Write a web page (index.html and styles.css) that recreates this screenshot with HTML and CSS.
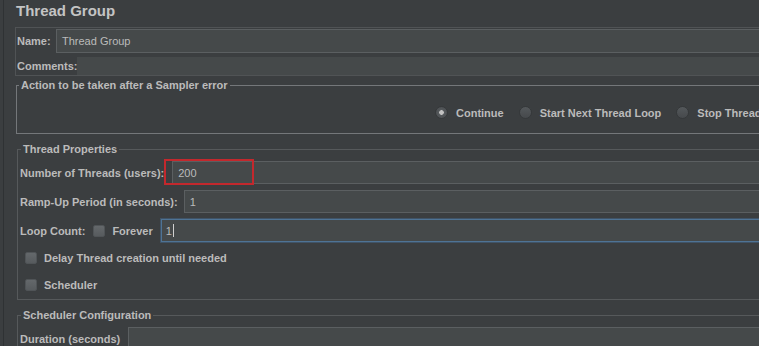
FILE: index.html
```html
<!doctype html>
<html>
    <head>
        <title>Thread Group</title>
        <link rel="stylesheet" href="styles.css">
    </head>
    <body>
        <div class="page">
            <h1 class="title">Thread Group</h1>

            <div class="name_box">
                <div class="row">
                    <span class="label label_name">Name:</span>
                    <div class="field field_tall">Thread Group</div>
                </div>
                <div class="row row_comments">
                    <span class="label label_comments">Comments:</span>
                    <div class="field field_short"></div>
                </div>
            </div>

            <fieldset class="group group_action">
                <legend>Action to be taken after a Sampler error</legend>
                <div class="radio_row">
                    <span class="option"><span class="radio selected"></span>Continue</span>
                    <span class="option"><span class="radio"></span>Start Next Thread Loop</span>
                    <span class="option"><span class="radio"></span>Stop Thread</span>
                </div>
            </fieldset>

            <fieldset class="group group_props">
                <legend>Thread Properties</legend>
                <div class="prop_row row_threads">
                    <span class="label">Number of Threads (users):</span>
                    <div class="field field_threads">200</div>
                    <div class="highlight"></div>
                </div>
                <div class="prop_row">
                    <span class="label">Ramp-Up Period (in seconds):</span>
                    <div class="field field_ramp">1</div>
                </div>
                <div class="prop_row">
                    <span class="label">Loop Count:</span>
                    <span class="check check_forever"></span>
                    <span class="check_label">Forever</span>
                    <div class="field field_loop focused">1<span class="caret"></span></div>
                </div>
                <div class="check_row">
                    <span class="check"></span>
                    <span class="check_label">Delay Thread creation until needed</span>
                </div>
                <div class="check_row">
                    <span class="check"></span>
                    <span class="check_label">Scheduler</span>
                </div>
            </fieldset>

            <fieldset class="group group_sched">
                <legend>Scheduler Configuration</legend>
                <div class="prop_row">
                    <span class="label">Duration (seconds)</span>
                    <div class="field field_duration"></div>
                </div>
            </fieldset>
        </div>
    </body>
</html>
```

FILE: styles.css
```css
html, body {
    margin: 0;
    padding: 0;
    overflow: hidden;
    background-color: #3b3e40;
}
body {
    font-family: "Liberation Sans", Arial, sans-serif;
    font-size: 11px;
    font-weight: bold;
    color: #bbbbbb;
}
.page {
    width: 820px;
    min-height: 346px;
    margin-left: 3px;
    padding-left: 11px;
    border-left: 1px solid #2f3234;
}
.title {
    margin: 0;
    padding: 2px 0 0 1px;
    font-size: 15px;
    line-height: 18px;
    color: #c4c4c4;
}

/* name / comments */
.name_box {
    margin-top: 7px;
    padding: 1px 0 0 1px;
    border: 1px solid #505355;
}
.row {
    display: flex;
    align-items: center;
}
.row_comments {
    margin-top: 4px;
}
.label {
    flex: none;
}
.label_name {
    width: 39px;
}
.label_comments {
    width: 60px;
}
.field {
    flex: 1;
    display: flex;
    align-items: center;
    box-sizing: border-box;
    height: 23px;
    padding-left: 5px;
    font-weight: normal;
    background-color: #45494a;
    border: 1px solid #5b5f61;
}
.field_tall {
    height: 24px;
}
.field_short {
    height: 18px;
    border-color: #45494a;
}

/* titled groups */
.group {
    min-width: 0;
    margin: 9px 0 0 2px;
    padding: 5px 0 4px 2px;
    border: 1px solid #56595b;
}
.group legend {
    margin-left: 1px;
    padding: 0 2px;
    line-height: 13px;
}
.group_action {
    margin: 3px 0 0 1px;
    padding: 14px 0 14px 0;
    border-color: #74777a;
}
.group_action legend {
    margin-left: 2px;
}
.radio_row {
    display: flex;
    align-items: center;
    height: 13px;
    margin-left: 418px;
}
.option {
    display: flex;
    align-items: center;
    gap: 8px;
    margin-right: 15px;
    white-space: nowrap;
}
.radio {
    width: 13px;
    height: 13px;
    box-sizing: border-box;
    border-radius: 50%;
    border: 1px solid #35383a;
    background: linear-gradient(#54585b, #46494c);
}
.radio.selected {
    background: radial-gradient(circle, #c2c2c2 0, #c2c2c2 2px, #55595c 2.6px, #46494c 100%);
}

/* thread properties */
.prop_row {
    display: flex;
    align-items: center;
    height: 23px;
}
.prop_row + .prop_row {
    margin-top: 6px;
}
.prop_row .field {
    margin-left: 7px;
}
.row_threads {
    position: relative;
}
.prop_row .field_threads {
    margin-left: 8px;
}
.prop_row .field_ramp {
    margin-left: 6px;
}
.prop_row .field_duration {
    margin-left: 8px;
}
.highlight {
    position: absolute;
    left: 144px;
    top: -2px;
    width: 90px;
    height: 26px;
    box-sizing: border-box;
    border: 2px solid #c3282d;
}
.check {
    flex: none;
    width: 12px;
    height: 12px;
    box-sizing: border-box;
    border-radius: 2px;
    border: 1px solid #505457;
    background: linear-gradient(#64686b, #575b5e);
}
.check_forever {
    margin-left: 8px;
}
.check_label {
    margin-left: 7px;
}
.prop_row .field_loop {
    margin-left: 8px;
    padding-left: 4px;
}
.field.focused {
    border-color: #4e7395;
    box-shadow: 0 0 0 1px rgba(70, 109, 148, 0.45);
}
.caret {
    display: inline-block;
    width: 1px;
    height: 13px;
    margin-left: 1px;
    background-color: #d0d0d0;
}
.check_row {
    display: flex;
    align-items: center;
    height: 20px;
    margin-top: 6px;
    padding-left: 5px;
}
.check_row + .check_row {
    margin-top: 7px;
}
```
